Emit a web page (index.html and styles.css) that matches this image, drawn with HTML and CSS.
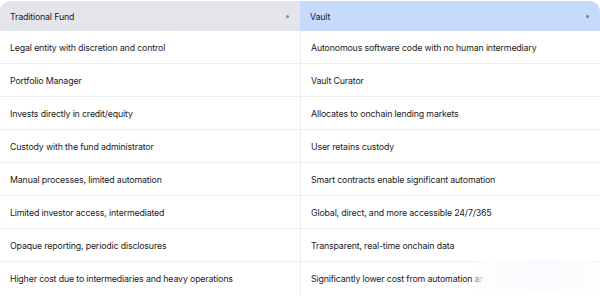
FILE: index.html
```html
<!DOCTYPE html>
<html>
<head>
<meta charset="utf-8">
<link rel="stylesheet" href="styles.css">
</head>
<body>
<div class="table">
  <div class="row head">
    <div class="cell h-left"><span>Traditional Fund</span><i class="dot grey"></i></div>
    <div class="cell h-right"><span>Vault</span><i class="dot blue"></i></div>
  </div>
  <div class="row"><div class="cell">Legal entity with discretion and control</div><div class="cell">Autonomous software code with no human intermediary</div></div>
  <div class="row"><div class="cell">Portfolio Manager</div><div class="cell">Vault Curator</div></div>
  <div class="row"><div class="cell">Invests directly in credit/equity</div><div class="cell">Allocates to onchain lending markets</div></div>
  <div class="row"><div class="cell">Custody with the fund administrator</div><div class="cell">User retains custody</div></div>
  <div class="row"><div class="cell">Manual processes, limited automation</div><div class="cell">Smart contracts enable significant automation</div></div>
  <div class="row"><div class="cell">Limited investor access, intermediated</div><div class="cell">Global, direct, and more accessible 24/7/365</div></div>
  <div class="row"><div class="cell">Opaque reporting, periodic disclosures</div><div class="cell">Transparent, real-time onchain data</div></div>
  <div class="row last"><div class="cell">Higher cost due to intermediaries and heavy operations</div><div class="cell">Significantly lower cost from automation and efficiency</div></div>
  <div class="veil"></div>
</div>
</body>
</html>
```
FILE: styles.css
```css
html, body {
  margin: 0;
  padding: 0;
  background: #ffffff;
}
body {
  font-family: Inter, "Noto Sans", sans-serif;
  font-size: 8.8px;
  letter-spacing: -0.15px;
  color: #1b1b1e;
  width: 600px;
  height: 298px;
  overflow: hidden;
}
.table {
  position: relative;
  padding-top: 1px;
}
.row {
  display: grid;
  grid-template-columns: 300px 300px;
  height: 33px;
  border-bottom: 1px solid #ececee;
  box-sizing: border-box;
}
.row.head {
  height: 30px;
  border-bottom: none;
}
.row.last {
  border-bottom: none;
}
.cell {
  display: flex;
  align-items: center;
  padding: 0 10px;
  box-sizing: border-box;
  white-space: nowrap;
}
.row .cell + .cell {
  border-left: 1px solid #ececee;
}
.row.head .cell + .cell {
  border-left: none;
}
.h-left {
  background: #e4e5ea;
  border-top-left-radius: 10px;
  justify-content: space-between;
  padding-right: 11px;
}
.h-right {
  background: #c6dbfb;
  border-top-right-radius: 10px;
  justify-content: space-between;
  padding-right: 11px;
}
.dot {
  width: 3px;
  height: 3px;
  border-radius: 50%;
  display: block;
}
.dot.grey { background: #8a8b92; }
.dot.blue { background: #5b7fc4; }
.veil {
  position: absolute;
  left: 476px;
  top: 259px;
  width: 118px;
  height: 33px;
  background: linear-gradient(90deg, rgba(250,250,255,0.55) 0%, #fdfdff 7%, #fbfaff 60%, #fdfdfd 100%);
  filter: blur(3px);
}
```
